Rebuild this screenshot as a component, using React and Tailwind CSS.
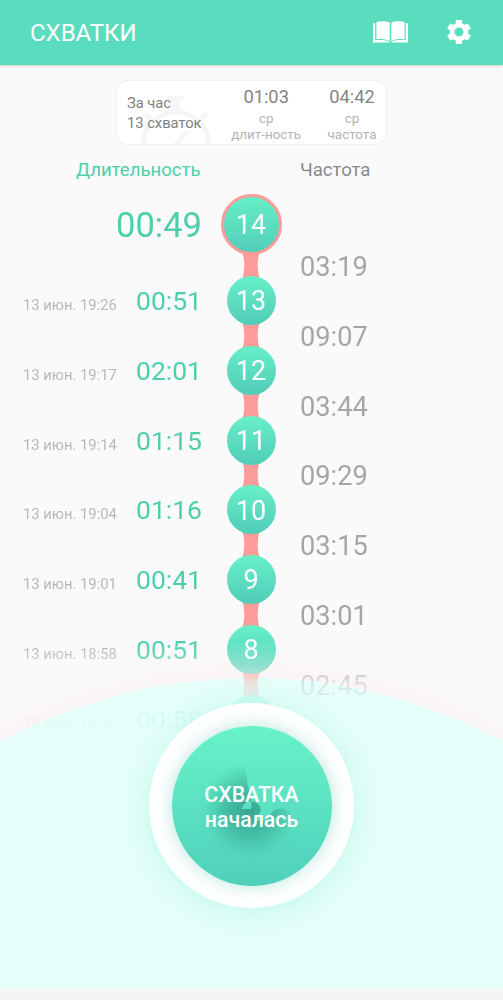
import React from "react"
import { MdSettings } from "react-icons/md"

const contractions = [
  { number: 13, date: "13 июн. 19:26", duration: "00:51" },
  { number: 12, date: "13 июн. 19:17", duration: "02:01" },
  { number: 11, date: "13 июн. 19:14", duration: "01:15" },
  { number: 10, date: "13 июн. 19:04", duration: "01:16" },
  { number: 9, date: "13 июн. 19:01", duration: "00:41" },
  { number: 8, date: "13 июн. 18:58", duration: "00:51" },
  { number: "", date: "13 июн. 18:55", duration: "00:58" },
]

const intervals = [
  "03:19",
  "09:07",
  "03:44",
  "09:29",
  "03:15",
  "03:01",
  "02:45",
  "03:15",
]

const BookIcon = () => (
  <svg className="w-[35px] h-[22px]" viewBox="0 0 35 22" fill="#fff">
    <path d="M0 2.2h2.2v17.1c5-.6 10-.4 14.2 1.2v1H0z" />
    <path d="M35 2.2h-2.2v17.1c-5-.6-10-.4-14.2 1.2v1H35z" />
    <path d="M3.4.9C8 0 13 .1 16.8 1.8v18.1C12.5 18.1 8 17.7 3.4 18.3z" />
    <path d="M31.6.9C27 0 22 .1 18.2 1.8v18.1c4.3-1.8 8.8-2.2 13.4-1.6z" />
  </svg>
)

const Header = () => (
  <header className="relative z-10 flex h-[65px] shrink-0 items-center bg-[#5adcbe] pl-[30px] pr-[29px] shadow-[0_1px_3px_rgba(0,0,0,0.2)]">
    <h1 className="grow text-[24px] leading-none text-white">СХВАТКИ</h1>
    <div className="flex items-center gap-[36px] pb-[2px]">
      <BookIcon />
      <MdSettings className="size-[30px] text-white" />
    </div>
  </header>
)

const Average = ({ value, label, className }) => (
  <div className={`flex flex-col items-center ${className}`}>
    <span className="text-[18.3px] leading-[22px] text-[#858585]">{value}</span>
    <span className="mt-[3px] text-center text-[13.4px] leading-[15.5px] text-[#b4b4b4]">
      ср
      <br />
      {label}
    </span>
  </div>
)

const Summary = () => (
  <section className="relative mx-auto mt-[15px] flex h-[65px] w-[271px] shrink-0 overflow-hidden rounded-[12px] border border-[#efefef] bg-white">
    {/* stopwatch in the background */}
    <svg
      className="absolute left-[20px] top-[14px] h-[50px] w-[80px]"
      viewBox="0 0 80 50"
      fill="none"
      stroke="#f6f6f6"
    >
      <circle cx="39" cy="50" r="33" strokeWidth="5" />
      <path d="M31 3.5h16" strokeWidth="5" />
      <path d="M39 4v14" strokeWidth="8" />
      <path d="M8 19l6 5M64 24l6-6" strokeWidth="5" />
      <path d="M37 52L50 36" strokeWidth="5" />
    </svg>
    <p className="relative w-[106px] pl-[10px] pt-[12px] text-[14.7px] leading-[20px] text-[#7f7f7f]">
      За час
      <br />
      13 схваток
    </p>
    <Average
      className="relative w-[88px] pl-[6px] pt-[5px]"
      value="01:03"
      label="длит-ность"
    />
    <Average
      className="relative w-[82px] pl-[12px] pt-[5px]"
      value="04:42"
      label="частота"
    />
  </section>
)

const Connector = () => (
  <svg className="h-[25px] w-[20px] shrink-0" viewBox="0 0 20 25">
    <path
      d="M1.5 0h17c-2.400 7-2.400 18 0 25h-17c2.400-7 2.400-18 0-25z"
      fill="#fd9b99"
    />
  </svg>
)

const Timeline = () => (
  <div className="flex h-[617px] shrink-0 [mask-image:linear-gradient(to_bottom,#000_0,#000_458px,rgba(0,0,0,0.6)_485px,rgba(0,0,0,0.24)_503px,rgba(0,0,0,0.09)_530px,rgba(0,0,0,0.04)_580px,rgba(0,0,0,0.02)_612px)]">
    <div className="w-[202px] shrink-0 text-[#4dcfab]">
      <div className="flex h-[82px] items-center justify-end pt-[3px] text-[34.5px] leading-none">
        00:49
      </div>
      {contractions.map((item) => (
        <div
          key={item.date}
          className="flex h-[69.8px] items-baseline pl-[23px] pt-[20px]"
        >
          <span className="w-[113.5px] text-[14.8px] text-[#b8b8b8]">
            {item.date}
          </span>
          <span className="text-[26.5px] leading-[32px]">{item.duration}</span>
        </div>
      ))}
      <div className="pl-[136.5px] pt-[16px] text-[26.5px] leading-[32px]">
        0
      </div>
    </div>
    <div className="flex w-[98px] shrink-0 flex-col items-center pt-[11px]">
      <div className="relative z-10 flex size-[61px] shrink-0 items-center justify-center rounded-full border-[3px] border-[#fd9b99] bg-linear-to-b from-[#68f0c8] to-[#50ccb8] bg-origin-border pt-[2px] text-[27px] text-white">
        14
      </div>
      {contractions.map((item) => (
        <div
          key={item.date}
          className="-mt-[2px] flex h-[71.8px] shrink-0 flex-col items-center"
        >
          <Connector />
          <div className="relative z-10 -mt-[2px] flex size-[49px] shrink-0 items-center justify-center rounded-full bg-linear-to-b from-[#68f0c8] to-[#50ccb8] pt-[2px] text-[27px] text-white">
            {item.number}
          </div>
        </div>
      ))}
    </div>
    <div className="pt-[48px] text-[27.2px] text-[#a6a6a6]">
      {intervals.map((interval, index) => (
        <div key={index} className="h-[69.8px] pt-[18px] leading-[36px]">
          {interval}
        </div>
      ))}
    </div>
  </div>
)

const StartButton = () => (
  <button className="absolute left-[149px] top-[703px] flex size-[205px] items-center justify-center rounded-full bg-white shadow-[0_3px_32px_rgba(80,220,190,0.25)]">
    <span className="relative flex size-[160px] flex-col items-center justify-center overflow-hidden rounded-full bg-linear-to-b from-[#68f3c8] to-[#4fd0bb] pt-[3px] shadow-[0_0_18px_rgba(70,190,165,0.38)]">
      <svg className="absolute inset-0 size-full" viewBox="0 0 160 160">
        <defs>
          <radialGradient
            id="shade"
            gradientUnits="userSpaceOnUse"
            cx="78"
            cy="84"
            r="50"
          >
            <stop offset="0" stopColor="#2a917f" stopOpacity="0.75" />
            <stop offset="0.5" stopColor="#2f9f89" stopOpacity="0.5" />
            <stop offset="0.8" stopColor="#35aa92" stopOpacity="0.18" />
            <stop offset="1" stopColor="#4bc9ad" stopOpacity="0" />
          </radialGradient>
        </defs>
        <path
          fill="url(#shade)"
          d="M26 58C38 46 50 38 65 36C73 40 75 47 75 54C75 60 80 68 79 75C75 75 70 79 70 83L79 83C81 80 78 77 80 75C85 76 88 79 89 84C87 89 83 91 84 94C90 97 96 95 99 88C102 82 112 80 119 87L126 135H26z"
        />
      </svg>
      <span className="relative text-center text-[21.3px] font-medium leading-[25px] text-white">
        СХВАТКА
        <br />
        началась
      </span>
    </span>
  </button>
)

const App = () => {
  return (
    <div className="relative flex h-[1000px] w-[503px] flex-col overflow-hidden bg-[#fafafa] font-['Roboto',sans-serif]">
      {/* dome behind the start button */}
      <div className="absolute inset-x-0 top-[600px] h-[389px] overflow-hidden">
        <div className="absolute -left-[274.5px] top-[78px] size-[1052px] rounded-full bg-[#e6fffa] shadow-[0_0_50px_rgba(255,228,228,0.4)]" />
      </div>
      <div className="absolute inset-x-0 bottom-0 h-[11px] bg-[#f5f5f5]" />
      <Header />
      <Summary />
      <div className="flex h-[38px] shrink-0 items-center pt-[13px] text-[18.6px]">
        <span className="w-[300px] pl-[76px] text-[#4dcfab]">Длительность</span>
        <span className="text-[#8a8a8a]">Частота</span>
      </div>
      <Timeline />
      <StartButton />
    </div>
  )
}

export default App
